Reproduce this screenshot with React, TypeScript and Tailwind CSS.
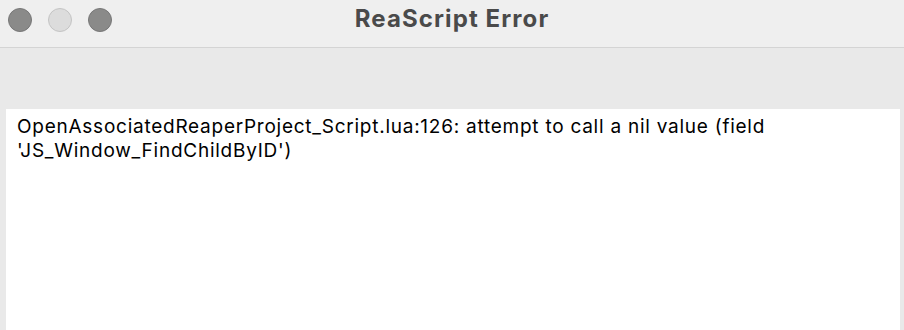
export default function App() {
  return (
    <div className="w-[904px] h-[330px] bg-[#e9e9e9] flex flex-col overflow-hidden" style={{ fontFamily: 'Inter, "Liberation Sans", Arial, sans-serif' }}>
      <div className="h-[48px] bg-[#efefef] border-b border-[#d4d4d4] relative flex items-center justify-center shrink-0">
        <div className="absolute left-[8px] top-[8px] flex gap-[16px]">
          <div className="w-[24px] h-[24px] rounded-full bg-[#8a8a89] border border-[#777]" />
          <div className="w-[24px] h-[24px] rounded-full bg-[#dcdcdc] border border-[#c4c4c4]" />
          <div className="w-[24px] h-[24px] rounded-full bg-[#8a8a89] border border-[#777]" />
        </div>
        <div className="text-[24px] font-bold tracking-[1.1px] text-[#4a4a4a] -mt-[9px]">ReaScript Error</div>
      </div>
      <div className="h-[61px] shrink-0" />
      <div className="flex-1 mx-[6px] mr-[4px] bg-white px-[11px] pt-[6px]">
        <div className="text-[19px] leading-[24px] tracking-[0.75px] text-black whitespace-nowrap">
          OpenAssociatedReaperProject_Script.lua:126: attempt to call a nil value (field
          <br />
          'JS_Window_FindChildByID')
        </div>
      </div>
    </div>
  );
}
